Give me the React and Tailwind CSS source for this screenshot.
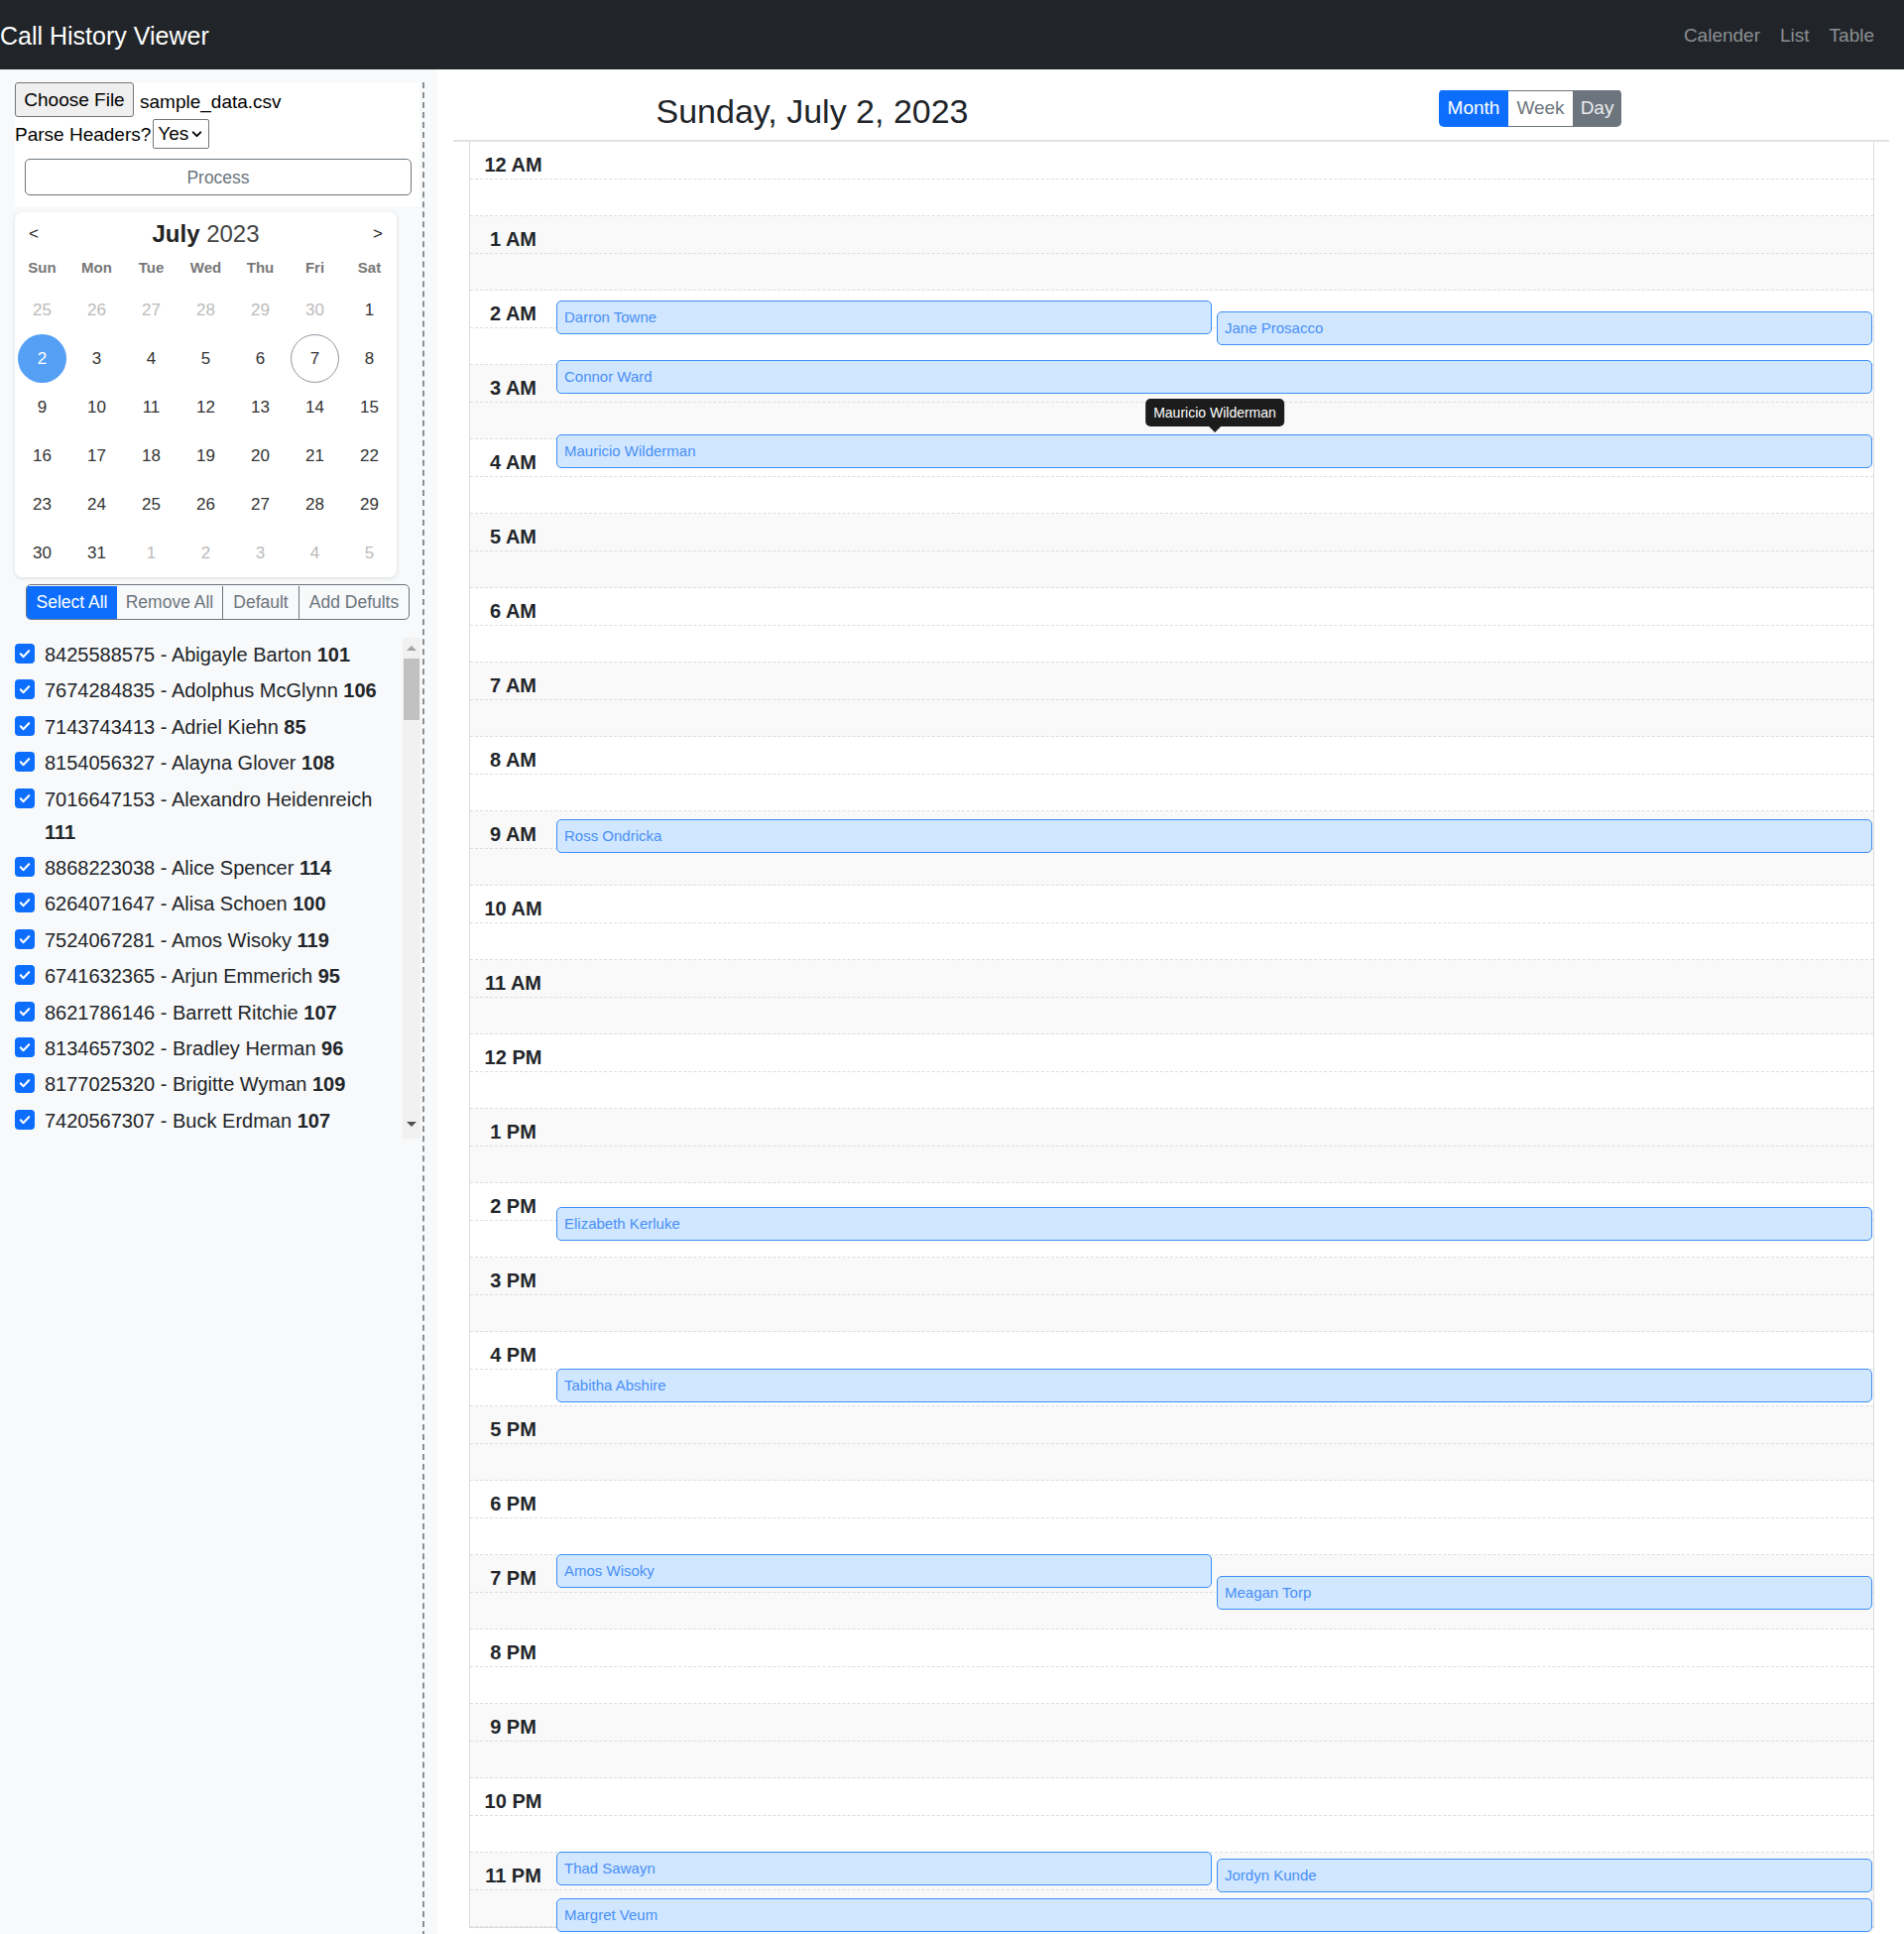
import React from 'react';

const people = [
  ['8425588575', 'Abigayle Barton', 101],
  ['7674284835', 'Adolphus McGlynn', 106],
  ['7143743413', 'Adriel Kiehn', 85],
  ['8154056327', 'Alayna Glover', 108],
  ['7016647153', 'Alexandro Heidenreich', 111],
  ['8868223038', 'Alice Spencer', 114],
  ['6264071647', 'Alisa Schoen', 100],
  ['7524067281', 'Amos Wisoky', 119],
  ['6741632365', 'Arjun Emmerich', 95],
  ['8621786146', 'Barrett Ritchie', 107],
  ['8134657302', 'Bradley Herman', 96],
  ['8177025320', 'Brigitte Wyman', 109],
  ['7420567307', 'Buck Erdman', 107],
];

const weeks = [
  [[25, 0], [26, 0], [27, 0], [28, 0], [29, 0], [30, 0], [1, 1]],
  [[2, 1], [3, 1], [4, 1], [5, 1], [6, 1], [7, 1], [8, 1]],
  [[9, 1], [10, 1], [11, 1], [12, 1], [13, 1], [14, 1], [15, 1]],
  [[16, 1], [17, 1], [18, 1], [19, 1], [20, 1], [21, 1], [22, 1]],
  [[23, 1], [24, 1], [25, 1], [26, 1], [27, 1], [28, 1], [29, 1]],
  [[30, 1], [31, 1], [1, 0], [2, 0], [3, 0], [4, 0], [5, 0]],
];

const hours = Array.from({ length: 24 }, (_, i) => {
  const h = i % 12 === 0 ? 12 : i % 12;
  return `${h} ${i < 12 ? 'AM' : 'PM'}`;
});

const spans = {
  full: 'left-0 right-0',
  left: 'left-0 w-[661px]',
  right: 'left-[666px] w-[661px]',
};

// tops are px from the top of the day grid (75px per hour)
const events = [
  { name: 'Darron Towne', top: 'top-[160px]', span: 'left' },
  { name: 'Jane Prosacco', top: 'top-[171px]', span: 'right' },
  { name: 'Connor Ward', top: 'top-[220px]', span: 'full' },
  { name: 'Mauricio Wilderman', top: 'top-[295px]', span: 'full' },
  { name: 'Ross Ondricka', top: 'top-[683px]', span: 'full' },
  { name: 'Elizabeth Kerluke', top: 'top-[1074px]', span: 'full' },
  { name: 'Tabitha Abshire', top: 'top-[1237px]', span: 'full' },
  { name: 'Amos Wisoky', top: 'top-[1424px]', span: 'left' },
  { name: 'Meagan Torp', top: 'top-[1446px]', span: 'right' },
  { name: 'Thad Sawayn', top: 'top-[1724px]', span: 'left' },
  { name: 'Jordyn Kunde', top: 'top-[1731px]', span: 'right' },
  { name: 'Margret Veum', top: 'top-[1771px]', span: 'full' },
];

function Check() {
  return (
    <span className="mt-[5px] flex h-[20px] w-[20px] shrink-0 items-center justify-center rounded-[4px] bg-[#0d6efd]">
      <svg width="14" height="14" viewBox="0 0 20 20" fill="none">
        <path d="M4 10.5l4 4 8-8.5" stroke="white" strokeWidth="3" strokeLinecap="round" strokeLinejoin="round" />
      </svg>
    </span>
  );
}

function MiniCalendar() {
  return (
    <div className="ml-[15px] mt-[3px] w-[385px] rounded-[7px] bg-white shadow-[0_1px_4px_rgba(0,0,0,0.12)]">
      <div className="mt-[6px] flex h-[43px] items-center justify-between px-[14px] text-[#222]">
        <span className="text-[17px]">&lt;</span>
        <span className="text-[24px]">
          <span className="font-bold">July</span> <span className="font-light text-[#444]">2023</span>
        </span>
        <span className="text-[17px]">&gt;</span>
      </div>
      <div className="grid h-[26px] grid-cols-7 items-center text-center text-[15px] font-bold text-[#777]">
        {['Sun', 'Mon', 'Tue', 'Wed', 'Thu', 'Fri', 'Sat'].map((d) => (
          <span key={d}>{d}</span>
        ))}
      </div>
      <div className="pt-[5px]">
        {weeks.map((w, wi) => (
          <div key={wi} className="grid h-[49px] grid-cols-7">
            {w.map(([d, cur], di) => {
              const selected = wi === 1 && d === 2;
              const today = wi === 1 && d === 7;
              return (
                <div key={di} className="flex items-center justify-center">
                  <span
                    className={
                      selected
                        ? 'flex h-[49px] w-[49px] items-center justify-center rounded-full bg-[#559ff5] text-[17px] text-white'
                        : today
                        ? 'flex h-[49px] w-[49px] items-center justify-center rounded-full border border-[#8f959e] text-[17px] text-[#333]'
                        : cur
                        ? 'text-[17px] text-[#333]'
                        : 'text-[17px] text-[#bbb]'
                    }
                  >
                    {d}
                  </span>
                </div>
              );
            })}
          </div>
        ))}
      </div>
    </div>
  );
}

function Sidebar() {
  return (
    <aside className="w-[441px] shrink-0 bg-[#f8f9fa]">
      <div className="min-h-[1880px] w-[428px] border-r-2 border-dashed border-[#8a8f94] pb-[20px]">
        <div className="ml-[15px] mt-[13px] w-[408px] bg-white pb-[11px] text-[19px] text-black">
          <div className="flex h-[37px] items-start">
            <span className="flex h-[35px] w-[120px] items-center justify-center rounded-[3px] border border-[#767676] bg-[#efefef] pt-[2px]">
              Choose File
            </span>
            <span className="ml-[6px] pt-[2px] leading-[35px]">sample_data.csv</span>
          </div>
          <div className="flex h-[30px] items-center">
            <span className="pt-[2px]">Parse Headers?</span>
            <span className="ml-[2px] flex h-[30px] w-[57px] items-center justify-between rounded-[2px] border border-[#767676] pl-[4px] pr-[5px] pt-[1px]">
              Yes
              <svg width="13" height="13" viewBox="0 0 24 24" fill="none">
                <path d="M5 8l7 7 7-7" stroke="black" strokeWidth="3.5" strokeLinecap="round" strokeLinejoin="round" />
              </svg>
            </span>
          </div>
          <div className="ml-[10px] mt-[10px] flex h-[37px] w-[390px] items-center justify-center rounded-[5px] border border-[#6c757d] pt-[2px] text-[17.5px] text-[#6c757d]">
            Process
          </div>
        </div>

        <MiniCalendar />

        <div className="ml-[26px] mt-[7px] flex h-[36px] w-[387px] overflow-hidden rounded-[5px] border border-[#6c757d] pt-[1px] text-[17.5px] text-[#6c757d]">
          <span className="flex w-[91px] items-center justify-center bg-[#0d6efd] text-white">Select All</span>
          <span className="flex w-[107px] items-center justify-center border-r border-[#6c757d]">Remove All</span>
          <span className="flex w-[77px] items-center justify-center border-r border-[#6c757d]">Default</span>
          <span className="flex flex-1 items-center justify-center">Add Defults</span>
        </div>

        <div className="ml-[15px] mt-[18px] flex h-[505px] w-[409px]">
          <div className="flex-1 overflow-hidden pt-[1px]">
            {people.map(([num, name, count]) => (
              <div key={num} className="mb-[3.4px] flex items-start text-[20px] leading-[33px] text-[#212529]">
                <Check />
                <span className="ml-[10px] pr-[6px]">
                  {num} - {name} <b>{count}</b>
                </span>
              </div>
            ))}
          </div>
          <div className="flex w-[18px] flex-col bg-[#f1f1f1]">
            <div className="flex h-[21px] items-center justify-center">
              <span className="h-0 w-0 border-x-[5px] border-b-[5px] border-x-transparent border-b-[#a3a3a3]" />
            </div>
            <div className="mx-[1px] h-[62px] bg-[#c1c1c1]" />
            <div className="flex-1" />
            <div className="flex h-[25px] items-center justify-center pb-[4px]">
              <span className="h-0 w-0 border-x-[5px] border-t-[5px] border-x-transparent border-t-[#505050]" />
            </div>
          </div>
        </div>
      </div>
    </aside>
  );
}

function DayView() {
  return (
    <div className="relative ml-[32px] mr-[30px] border-x border-b border-[#ddd]">
      {hours.map((label, i) => (
        <div key={label} className={i % 2 === 1 ? 'bg-[#f9f9f9]' : 'bg-white'}>
          <div className="h-[37.5px] border-b border-dashed border-[#ddd]">
            <div className="w-[87px] pt-[8px] text-center text-[20px] font-bold leading-[30px] text-[#212529]">{label}</div>
          </div>
          <div className="h-[37.5px] border-b border-dashed border-[#ddd]" />
        </div>
      ))}

      <div className="absolute inset-y-0 left-[87px] right-[1px]">
        {events.map((e) => (
          <div
            key={e.name}
            className={`absolute ${e.top} ${spans[e.span]} flex h-[34px] items-center rounded-[5px] border-[1.5px] border-[#3d8ef6] bg-[#d0e7ff] pl-[7px] text-[15px] text-[#4a8ff5]`}
          >
            {e.name}
          </div>
        ))}
        <div className="absolute left-[664px] top-[259px] -translate-x-1/2">
          <div className="flex h-[28px] items-center whitespace-nowrap rounded-[5px] bg-[#1c1c1c] px-[8px] text-[14px] text-white">
            Mauricio Wilderman
          </div>
          <div className="mx-auto h-0 w-0 border-x-[6px] border-t-[6px] border-x-transparent border-t-[#1c1c1c]" />
        </div>
      </div>
    </div>
  );
}

export default function App() {
  return (
    <div className="min-h-screen bg-white font-['Liberation_Sans',Arial,sans-serif] text-[#212529]">
      <nav className="flex h-[70px] items-center justify-between bg-[#212529] pt-[3px]">
        <span className="text-[25px] text-white">Call History Viewer</span>
        <div className="flex pr-[20px] text-[19px] text-[#8c8f93]">
          <span className="px-[10px]">Calender</span>
          <span className="px-[10px]">List</span>
          <span className="px-[10px]">Table</span>
        </div>
      </nav>

      <div className="flex">
        <Sidebar />
        <main className="flex-1 bg-white">
          <div className="ml-[16px] mr-[15px] flex h-[73px] border-b-2 border-[#dee2e6]">
            <div className="flex flex-1 justify-center pt-[21px]">
              <h2 className="text-[34px] font-medium leading-[42px] text-[#212529]">Sunday, July 2, 2023</h2>
            </div>
            <div className="flex flex-1 justify-center pt-[20px]">
              <div className="flex h-[38px] overflow-hidden rounded-[5px] pt-[1px] text-[19px]">
                <span className="flex items-center bg-[#0d6efd] px-[9px] text-white">Month</span>
                <span className="flex items-center border-y border-[#6c757d] bg-white px-[8px] text-[#6c757d]">Week</span>
                <span className="flex items-center bg-[#6c757d] px-[8px] text-[#e9ecef]">Day</span>
              </div>
            </div>
          </div>
          <DayView />
        </main>
      </div>
    </div>
  );
}
